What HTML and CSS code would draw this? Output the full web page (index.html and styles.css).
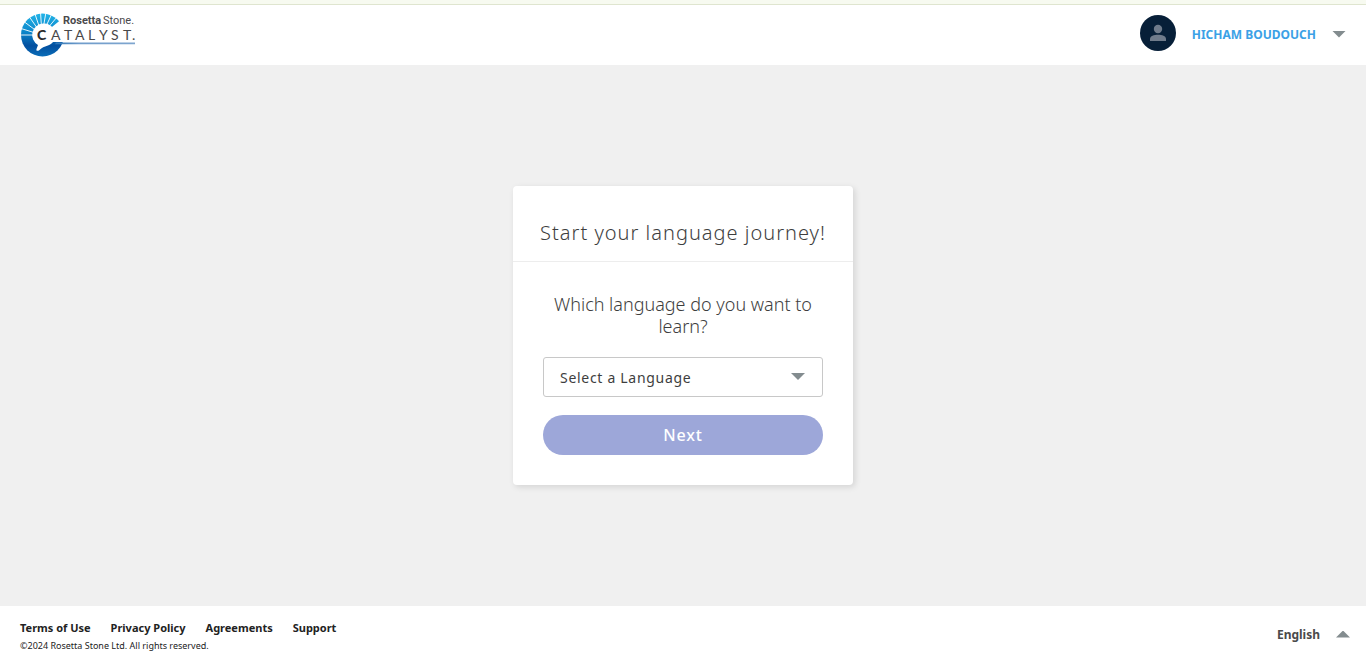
FILE: index.html
```html
<!DOCTYPE html>
<html lang="en">
<head>
<meta charset="utf-8">
<title>Rosetta Stone Catalyst</title>
<meta name="viewport" content="width=device-width, initial-scale=1">
<link rel="stylesheet" href="styles.css">
</head>
<body>
<div class="notice-strip"></div>
<header class="header">
  <a class="logo" href="#" aria-label="Rosetta Stone Catalyst">
    <svg width="116" height="48" viewBox="0 0 116 48">
      <defs>
        <linearGradient id="disc" x1="0" y1="0" x2="0" y2="1">
          <stop offset="0" stop-color="#22b4e8"/>
          <stop offset=".45" stop-color="#0b83c8"/>
          <stop offset=".75" stop-color="#034f9f"/>
          <stop offset="1" stop-color="#0a6db8"/>
        </linearGradient>
        <linearGradient id="rule" x1="0" x2="1" y1="0" y2="0">
          <stop offset="0" stop-color="#2b74b5"/>
          <stop offset=".3" stop-color="#6f9ccb"/>
          <stop offset="1" stop-color="#7fa6cf"/>
        </linearGradient>
      </defs>
      <circle cx="22.500" cy="24" r="21.5" fill="url(#disc)"/>
      <path d="M22 24 43 7H64V31H22Z" fill="#fff"/>
      <g stroke="#fff" stroke-width=".9">
        <path d="M22 24 0 24M22 24 1 17.500M22 24 4.500 11M22 24 9.500 6M22 24 15 3M22 24 20.500 1M22 24 26 1M22 24 31.500 3.500M22 24 37 6"/>
      </g>
      <path d="M23 12.500a11.500 11.500 0 0 1 10.500 17.800C31 35 24 34.500 19.500 39 17.500 40.500 16 40 16.500 38L18 34A11.500 11.500 0 0 1 23 12.500Z" fill="#fff"/>
      <path d="M36 31.500H115V33.200H35Z" fill="url(#rule)"/>
      <text class="brand-bold" x="43" y="13">Rosetta</text>
      <text class="brand-light" x="83" y="13">Stone.</text>
      <text class="product-initial" x="17" y="29">C</text>
      <text class="product-text" x="31 44 55 68 79 91 103 112" y="29">ATALYST.</text>
    </svg>
  </a>
  <button class="account" type="button">
    <span class="avatar">
      <svg width="18" height="18" viewBox="0 0 18 18" fill="#6f7b8b">
        <circle cx="9" cy="5" r="4.200"/>
        <path d="M1 17V15C1 12 5 10.700 9 10.700S17 12 17 15V17Z"/>
      </svg>
    </span>
    <span class="account-name">HICHAM BOUDOUCH</span>
    <span class="caret account-caret"></span>
  </button>
</header>
<main class="main">
  <section class="card">
    <h1 class="card-title">Start your language journey!</h1>
    <form class="card-body">
      <label class="question" for="language">Which language do you want to learn?</label>
      <div class="select-wrap">
        <select class="language-select" id="language"><option>Select a Language</option></select>
        <span class="caret select-caret"></span>
      </div>
      <button class="next" type="button">Next</button>
    </form>
  </section>
</main>
<footer class="footer">
  <div class="legal">
    <nav class="links">
      <a href="#">Terms of Use</a>
      <a href="#">Privacy Policy</a>
      <a href="#">Agreements</a>
      <a href="#">Support</a>
    </nav>
    <p class="copyright">©2024 Rosetta Stone Ltd. All rights reserved.</p>
  </div>
  <button class="locale" type="button">English <span class="caret caret-up"></span></button>
</footer>
</body>
</html>
```

FILE: styles.css
```css
* { box-sizing: border-box; }

body {
  display: flex;
  flex-direction: column;
  min-height: 100vh;
  margin: 0;
  background: #f0f0f0;
  color: #3e3e3e;
  font-family: "Noto Sans", "Open Sans", sans-serif;
}

button, select { font-family: inherit; }

.notice-strip {
  height: 5px;
  background: #f7faf0;
  border-bottom: 1px solid #dfe5cf;
}

.header {
  display: flex;
  align-items: center;
  justify-content: space-between;
  height: 60px;
  padding: 0 20px;
  background: #fff;
}

.logo svg { display: block; }

.brand-bold,
.brand-light {
  fill: #4a4a4c;
  font-family: Roboto, sans-serif;
  font-size: 11px;
}

.brand-bold { font-weight: 700; }

.brand-light { font-weight: 400; }

.product-initial {
  fill: #2b2b2d;
  font-family: Lato, sans-serif;
  font-size: 14px;
  font-weight: 900;
}

.product-text {
  fill: #48484a;
  font-family: Lato, sans-serif;
  font-size: 14px;
  font-weight: 400;
}

.account {
  display: flex;
  align-items: center;
  gap: 16px;
  padding: 0 0 4px;
  border: 0;
  background: none;
}

.avatar {
  display: grid;
  place-items: center;
  width: 36px;
  height: 36px;
  border-radius: 50%;
  background: #071f38;
}

.account-name {
  padding-top: 4px;
  color: #3ba1e6;
  font-size: 12px;
  font-weight: 700;
  line-height: 16px;
}

.caret {
  width: 14px;
  height: 7px;
  background: #838c8f;
  clip-path: polygon(0 0, 100% 0, 50% 100%);
}

.account-caret { margin-top: 2px; }

.caret-up { clip-path: polygon(50% 0, 100% 100%, 0 100%); }

.main {
  display: flex;
  flex: 1;
  align-items: center;
  justify-content: center;
}

.card {
  width: 340px;
  border-radius: 4px;
  background: #fff;
  box-shadow: 2px 2px 6px rgba(0, 0, 0, .12);
}

.card-title {
  margin: 0;
  padding: 33px 0 14px;
  border-bottom: 1px solid #ededed;
  font-size: 20px;
  font-weight: 300;
  letter-spacing: .05em;
  line-height: 28px;
  text-align: center;
}

.card-body {
  display: flex;
  flex-direction: column;
  padding: 31px 30px 30px;
}

.question {
  font-size: 18px;
  font-weight: 300;
  line-height: 22px;
  text-align: center;
}

.select-wrap {
  position: relative;
  margin: 20px 0 18px;
}

.language-select {
  display: block;
  width: 100%;
  height: 40px;
  padding: 0 40px 0 16px;
  border: 1px solid #c8c8c8;
  border-radius: 3px;
  appearance: none;
  background: #fff;
  color: #3e3e3e;
  font-size: 14px;
  letter-spacing: .05em;
}

.select-caret {
  position: absolute;
  top: 16px;
  right: 18px;
  pointer-events: none;
}

.next {
  height: 40px;
  border: 0;
  border-radius: 20px;
  background: #9da7d9;
  color: #fff;
  font-size: 16px;
  font-weight: 500;
  letter-spacing: .05em;
}

.footer {
  display: flex;
  align-items: center;
  justify-content: space-between;
  height: 50px;
  padding: 0 16px 0 20px;
  background: #fff;
}

.legal { padding-top: 10px; }

.links {
  display: flex;
  gap: 20px;
  font-size: 11px;
  font-weight: 700;
  line-height: 16px;
}

.links a {
  color: #222;
  text-decoration: none;
}

.copyright {
  margin: 4px 0 0;
  color: #222;
  font-size: 9px;
  line-height: 12px;
}

.locale {
  display: flex;
  align-items: center;
  gap: 16px;
  padding: 6px 0 0;
  border: 0;
  background: none;
  color: #4a4a4a;
  font-size: 12px;
  font-weight: 700;
}
```
